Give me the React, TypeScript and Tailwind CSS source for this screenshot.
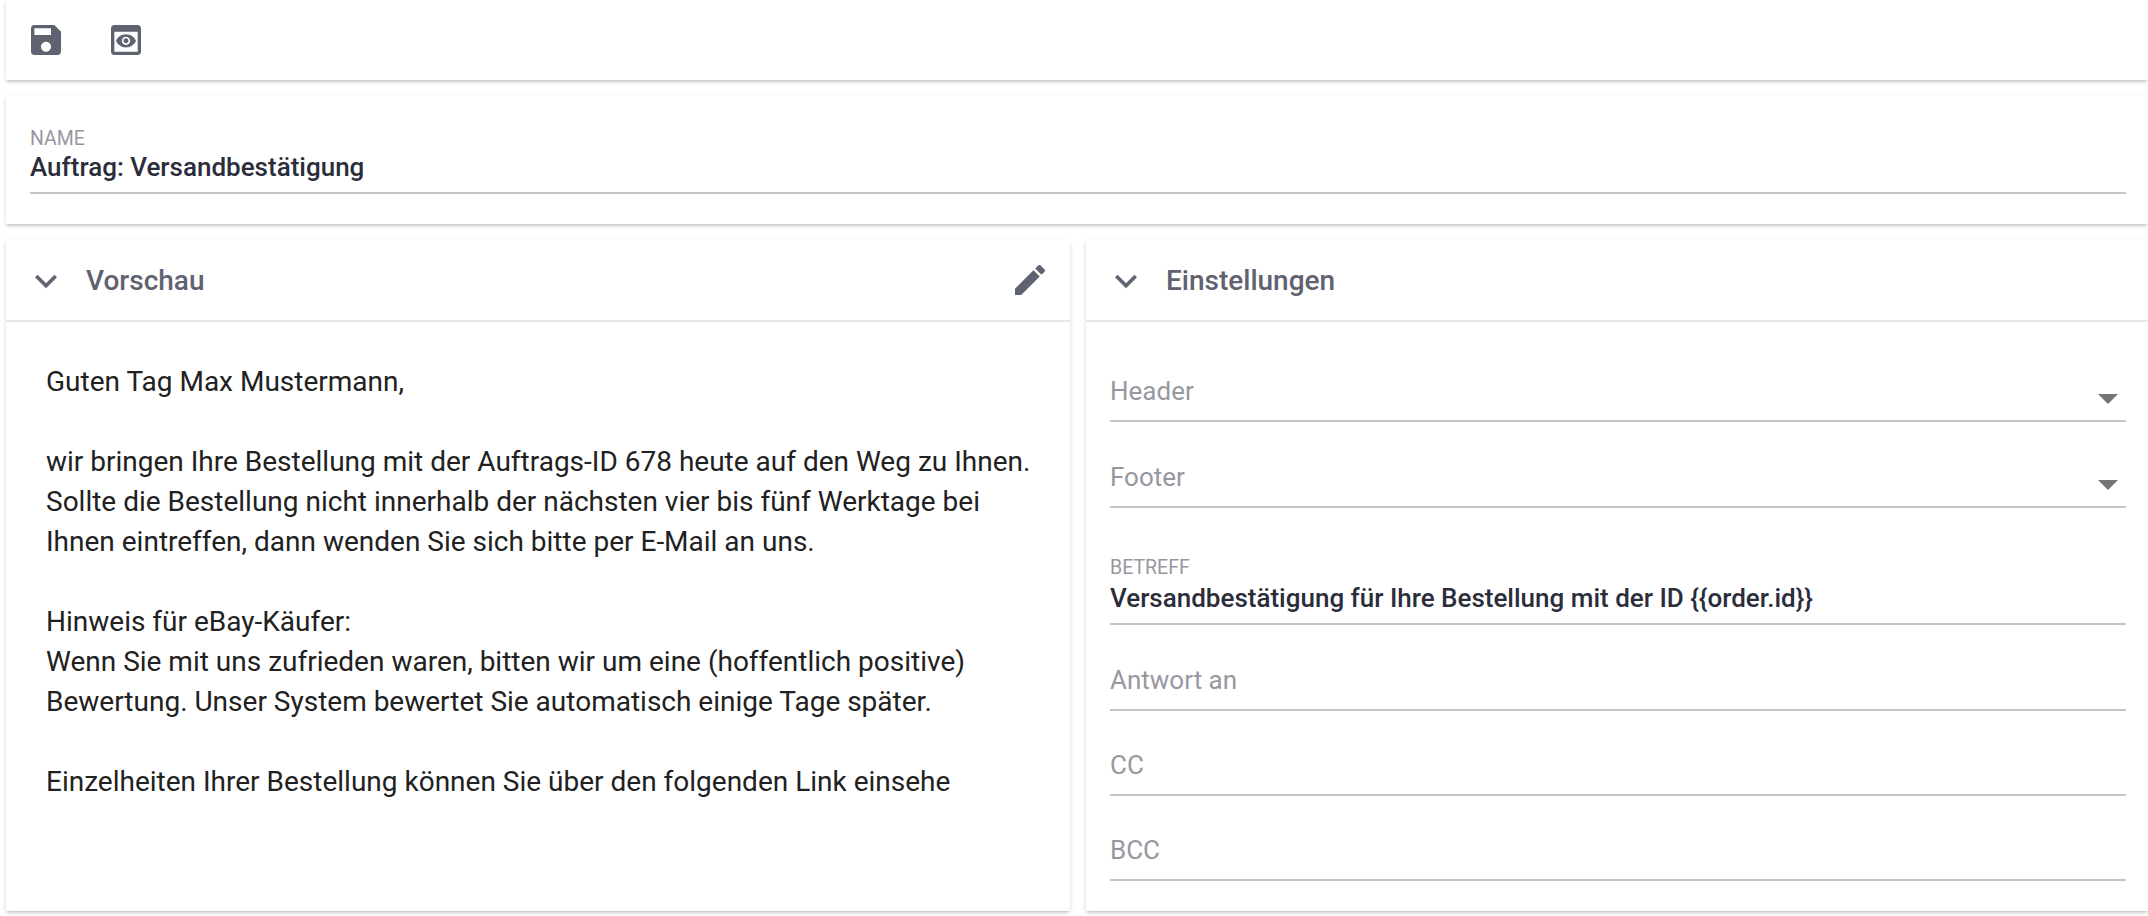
const font = { fontFamily: "Roboto, sans-serif" };

const SaveIcon = () => (
  <svg viewBox="0 0 24 24" className="w-10 h-10 fill-[#5f6270]">
    <path d="M17 3H5c-1.11 0-2 .9-2 2v14c0 1.1.89 2 2 2h14c1.1 0 2-.9 2-2V7l-4-4zm-5 16c-1.66 0-3-1.34-3-3s1.34-3 3-3 3 1.34 3 3-1.34 3-3 3zm3-10H5V5h10v4z" />
  </svg>
);

const PreviewIcon = () => (
  <svg viewBox="0 0 24 24" className="w-10 h-10 fill-[#5f6270]">
    <path d="M19 3H5c-1.11 0-2 .9-2 2v14c0 1.1.89 2 2 2h14c1.1 0 2-.9 2-2V5c0-1.1-.89-2-2-2zm0 16H5V7h14v12zm-7-10.5c-2.73 0-5.06 1.66-6 4 .94 2.34 3.27 4 6 4s5.06-1.66 6-4c-.94-2.34-3.27-4-6-4zm0 6.5c-1.38 0-2.5-1.12-2.5-2.5S10.62 10 12 10s2.5 1.12 2.5 2.5S13.38 15 12 15zm0-4c-.83 0-1.5.67-1.5 1.5S11.17 14 12 14s1.5-.67 1.5-1.5S12.83 11 12 11z" />
  </svg>
);

const EditIcon = () => (
  <svg viewBox="0 0 24 24" className="w-10 h-10 fill-[#5f6270]">
    <path d="M3 17.25V21h3.75L17.81 9.94l-3.75-3.75L3 17.25zM20.71 7.04c.39-.39.39-1.02 0-1.41l-2.34-2.34c-.39-.39-1.02-.39-1.41 0l-1.83 1.83 3.75 3.75 1.83-1.83z" />
  </svg>
);

const ChevronIcon = () => (
  <svg viewBox="0 0 24 24" className="w-11 h-11 mt-[2px] fill-[#5f6270]">
    <path d="M16.59 8.59 12 13.17 7.41 8.59 6 10l6 6 6-6z" />
  </svg>
);

const PanelHeader = ({ title, edit }: { title: string; edit?: boolean }) => (
  <div className="h-[82px] shrink-0 flex items-center pl-[18px] pr-5 border-b-2 border-[#e6e6e8]">
    <ChevronIcon />
    <span className="ml-[18px] mt-[2px] text-[28px] font-medium text-[#5f6270]">{title}</span>
    {edit && (
      <div className="ml-auto">
        <EditIcon />
      </div>
    )}
  </div>
);

const EmptyField = ({ label, select, h }: { label: string; select?: boolean; h: string }) => (
  <div className={`${h} flex items-end justify-between border-b-2 border-[#c3c3c9] pb-[14px]`}>
    <span className="text-[26px] leading-[30px] text-[#97989f]">{label}</span>
    {select && <div className="mr-2 mb-[2px] w-0 h-0 border-x-[10px] border-x-transparent border-t-[10px] border-t-[#757575]" />}
  </div>
);

const ValueField = ({ label, value, className, valueClass }: { label: string; value: string; className?: string; valueClass: string }) => (
  <div className={`border-b-2 border-[#c3c3c9] ${className ?? ""}`}>
    <div className="text-[19.5px] leading-[24px] text-[#97989f]">{label}</div>
    <div className={`text-[26px] leading-[33px] font-medium text-[#2b2d3b] ${valueClass}`}>{value}</div>
  </div>
);

const cardClass = "bg-white shadow-[0_2px_3px_-1px_rgba(0,0,0,0.25),0_3px_6px_0_rgba(0,0,0,0.05),0_0_8px_0_rgba(0,0,0,0.03)]";

const lines = [
  "Guten Tag Max Mustermann,",
  "",
  "wir bringen Ihre Bestellung mit der Auftrags-ID 678 heute auf den Weg zu Ihnen.",
  "Sollte die Bestellung nicht innerhalb der nächsten vier bis fünf Werktage bei",
  "Ihnen eintreffen, dann wenden Sie sich bitte per E-Mail an uns.",
  "",
  "Hinweis für eBay-Käufer:",
  "Wenn Sie mit uns zufrieden waren, bitten wir um eine (hoffentlich positive)",
  "Bewertung. Unser System bewertet Sie automatisch einige Tage später.",
  "",
  "Einzelheiten Ihrer Bestellung können Sie über den folgenden Link einsehe",
];

export default function App() {
  return (
    <div className="h-[916px] overflow-hidden bg-white pl-[6px] flex flex-col gap-4" style={font}>
      {/* toolbar */}
      <div className={`${cardClass} h-[80px] shrink-0 flex items-start pt-5 pl-5 gap-10`}>
        <SaveIcon />
        <PreviewIcon />
      </div>

      {/* name */}
      <div className={`${cardClass} h-[128px] shrink-0 pl-6 pr-[22px] pt-[31px]`}>
        <ValueField label="NAME" value="Auftrag: Versandbestätigung" valueClass="pb-2" />
      </div>

      {/* panels */}
      <div className="grid grid-cols-[1064px_1fr] gap-4 h-[671px] shrink-0">
        <div className={`${cardClass} flex flex-col`}>
          <PanelHeader title="Vorschau" edit />
          <div className="pl-10 pt-[39.5px] text-[28px] leading-[40px] text-[#212121] whitespace-nowrap">
            {lines.map((l, i) => (
              <div key={i} className="h-[40px]">{l}</div>
            ))}
          </div>
        </div>

        <div className={`${cardClass} flex flex-col`}>
          <PanelHeader title="Einstellungen" />
          <div className="pl-6 pr-[22px] flex flex-col">
            <EmptyField label="Header" select h="h-[100px]" />
            <EmptyField label="Footer" select h="h-[86px]" />
            <ValueField
              label="BETREFF"
              value="Versandbestätigung für Ihre Bestellung mit der ID {{order.id}}"
              className="mt-[48px]"
              valueClass="pt-[2px] pb-2"
            />
            <EmptyField label="Antwort an" h="h-[86px]" />
            <EmptyField label="CC" h="h-[85px]" />
            <EmptyField label="BCC" h="h-[85px]" />
          </div>
        </div>
      </div>
    </div>
  );
}
